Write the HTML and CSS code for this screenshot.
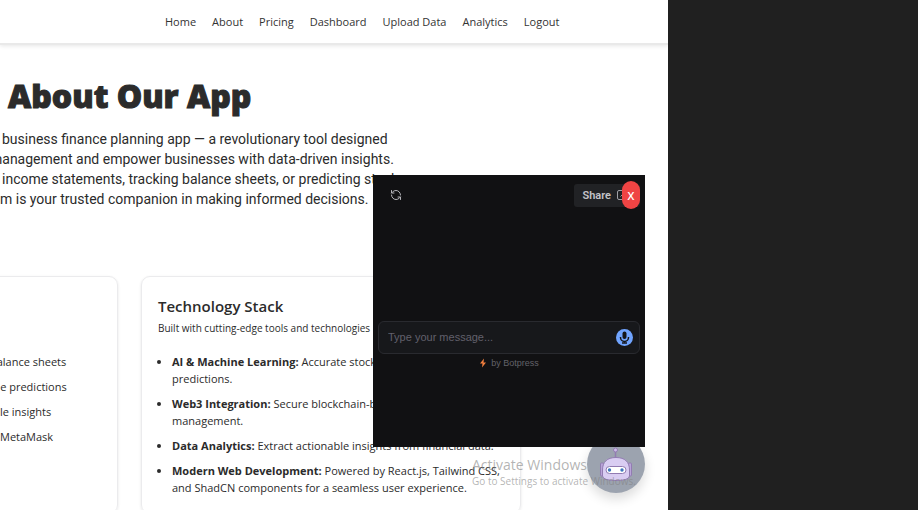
FILE: index.html
```html
<!DOCTYPE html>
<html lang="en">
<head>
<meta charset="utf-8">
<title>About Our App</title>
<link rel="stylesheet" href="styles.css">
</head>
<body>
<div class="desktop">
  <div class="page">
    <nav class="nav">
      <a href="#">Home</a>
      <a href="#">About</a>
      <a href="#">Pricing</a>
      <a href="#">Dashboard</a>
      <a href="#">Upload Data</a>
      <a href="#">Analytics</a>
      <a href="#">Logout</a>
    </nav>
    <main>
      <header class="hero">
        <h1>About Our App</h1>
        <p>business finance planning app — a revolutionary tool designed</p>
        <p class="cut">management and empower businesses with data-driven insights.</p>
        <p>income statements, tracking balance sheets, or predicting stock</p>
        <p class="flush">m is your trusted companion in making informed decisions.</p>
      </header>
      <div class="cards">
        <section class="card card-features">
          <ul class="plain">
            <li class="cut">balance sheets</li>
            <li class="cut">me predictions</li>
            <li>le insights</li>
            <li>MetaMask</li>
          </ul>
        </section>
        <section class="card">
          <h2>Technology Stack</h2>
          <p class="sub">Built with cutting-edge tools and technologies</p>
          <ul class="stack">
            <li><strong>AI &amp; Machine Learning:</strong> Accurate stock market<br>predictions.</li>
            <li><strong>Web3 Integration:</strong> Secure blockchain-based<br>management.</li>
            <li><strong>Data Analytics:</strong> Extract actionable insights from financial data.</li>
            <li><strong>Modern Web Development:</strong> Powered by React.js, Tailwind CSS,<br>and ShadCN components for a seamless user experience.</li>
          </ul>
        </section>
      </div>
    </main>

    <button class="bot" type="button" aria-label="Open chat">
      <svg viewBox="0 0 58 58" width="58" height="58" aria-hidden="true">
        <g stroke="#927cb2" stroke-width="1">
          <path d="M28.500 16v7" stroke-width="1.500"/>
          <circle cx="28.500" cy="15" r="2" fill="#cdbbe8"/>
          <rect x="13.500" y="28" width="3" height="13" rx="1" fill="#b9a4d8"/>
          <rect x="41.500" y="28" width="3" height="13" rx="1" fill="#b9a4d8"/>
          <path d="M15.500 41V35C15.500 27 20 22.500 29 22.500S42.500 27 42.500 35V41Q42 45.500 29 45.500T15.500 41Z" fill="#d9cdf2"/>
          <rect x="19" y="31.500" width="20" height="7" rx="3.500" fill="#fff"/>
        </g>
        <circle cx="22.500" cy="35" r="1.700" fill="#3f78bd"/>
        <circle cx="35" cy="35" r="1.700" fill="#3f78bd"/>
      </svg>
    </button>

    <section class="chat" aria-label="Chat">
      <div class="chat-top">
        <button class="refresh" type="button" aria-label="Restart conversation">
          <svg viewBox="0 0 24 24" width="12" height="12" fill="none" stroke="#b5b5ba" stroke-width="2" stroke-linecap="round" stroke-linejoin="round"><path d="M21 12a9 9 0 0 0-9-9 9.750 9.750 0 0 0-6.740 2.740L3 8M3 3v5h5M3 12a9 9 0 0 0 9 9 9.750 9.750 0 0 0 6.740-2.740L21 16M16 16h5v5"/></svg>
        </button>
        <button class="share" type="button">Share
          <svg viewBox="0 0 12 12" width="12" height="12" fill="none" stroke="#a0a0a5"><path d="M6 1.500H3Q1.500 1.500 1.500 3V9Q1.500 10.500 3 10.500H9Q10.500 10.500 10.500 9V7M4.500 7.500L10.500 1.500M8 1.500h2.500V4"/></svg>
        </button>
        <button class="close" type="button">X</button>
      </div>
      <form class="composer">
        <input type="text" aria-label="Message" placeholder="Type your message...">
        <button class="mic" type="button" aria-label="Record voice">
          <svg viewBox="0 0 17 17" width="17" height="17" fill="none"><rect x="6.500" y="2.500" width="4" height="7.500" rx="2" fill="#15161a"/><path d="M4.500 8v.5a4 4 0 0 0 8 0V8M8.500 12.500v2M6 14h5" stroke="#15161a" stroke-width="1.500"/></svg>
        </button>
      </form>
      <p class="brand">
        <svg viewBox="0 0 8 10" width="8" height="10" aria-hidden="true"><path d="M5 .5L1 5.500H3.500L3 9.500L7 4.500H4.500Z" fill="#f5803e"/></svg>
        by Botpress
      </p>
    </section>

    <div class="watermark">
      <p class="wm-title">Activate Windows</p>
      <p>Go to Settings to activate Windows.</p>
    </div>
  </div>
</div>
</body>
</html>
```
FILE: styles.css
```css
* { box-sizing: border-box; }
body, h1, h2, p, ul { margin: 0; padding: 0; }
body {
  background: #202020;
  color: #2b2b2b;
  font-family: "Open Sans", "Noto Sans", sans-serif;
  font-size: 11px;
  line-height: 17px;
}
button, input { font: inherit; border: 0; padding: 0; margin: 0; }
.desktop {
  display: grid;
  grid-template-columns: 334fr 125fr;
  height: 100vh;
}
.page {
  position: relative;
  overflow: hidden;
  background: #fff;
}
.nav {
  display: flex;
  gap: 16px;
  padding: 13px 0 13px 165px;
  box-shadow: 0 2px 0 #e9e9e9, 0 3px 4px rgba(0, 0, 0, .1);
}
.nav a { color: #333; text-decoration: none; }

.hero { padding-top: 32px; font-size: 14px; line-height: 20px; white-space: nowrap; }
.hero h1 {
  padding-left: 8px;
  margin-bottom: 12px;
  font-size: 32px;
  line-height: 42px;
  font-weight: 800;
  -webkit-text-stroke: 1px #2b2b2b;
}
.hero p { padding-left: 2px; font-family: Roboto, sans-serif; }
.hero .cut { padding-left: 0; text-indent: -10px; }
.hero .flush { padding-left: 0; }

.cards {
  display: grid;
  grid-template-columns: 130px 380px;
  gap: 23px;
  margin: 67px 0 0 -12px;
}
.card {
  border: 1px solid #ebebed;
  border-radius: 9px;
  padding: 17px 16px;
  box-shadow: 0 1px 3px rgba(0, 0, 0, .1);
  white-space: nowrap;
}
.card h2 { font-size: 15px; line-height: 24px; font-weight: 600; }
.sub { margin-top: 3px; font-size: 10px; line-height: 14px; }
ul { display: grid; gap: 8px; }
.stack { margin-top: 18px; padding-left: 14px; }
.card-features { padding: 76px 0 0 11px; }
.plain { list-style: none; }
.plain .cut { text-indent: -10px; }

.bot {
  position: absolute;
  right: 23px;
  bottom: 17px;
  width: 58px;
  height: 58px;
  border-radius: 50%;
  background: #9ca3af;
  box-shadow: 0 6px 12px rgba(0, 0, 0, .14);
}
.bot svg { display: block; }
.chat {
  position: absolute;
  right: 23px;
  bottom: 63px;
  width: 272px;
  height: 272px;
  padding: 5px;
  background: #111113;
  font-family: "Liberation Sans", Arial, sans-serif;
}
.chat-top { display: flex; align-items: center; height: 30px; padding-left: 12px; }
.refresh { width: 12px; height: 12px; background: none; }
.refresh svg { display: block; }
.share {
  display: flex;
  align-items: center;
  gap: 5px;
  height: 23px;
  margin-left: auto;
  padding: 0 12px 0 8px;
  border-radius: 3px;
  background: #212225;
  color: #c4c4c8;
  font-family: Roboto, sans-serif;
  font-weight: 600;
}
.close {
  width: 18px;
  height: 28px;
  margin-left: -18px;
  border-radius: 9px;
  background: #ef4444;
  color: #fff;
  z-index: 1;
  font-family: "Open Sans", sans-serif;
  font-weight: 600;
}
.composer {
  display: flex;
  align-items: center;
  height: 33px;
  margin-top: 111px;
  padding: 0 6px 0 9px;
  border: 1px solid #292a2f;
  border-radius: 6px;
  background: #17181b;
}
.composer input {
  flex: 1;
  min-width: 0;
  background: none;
  color: #ddd;
  font-size: 11px;
}
.composer input::placeholder { color: #62606c; }
.mic { width: 17px; height: 17px; border-radius: 50%; background: #70a4ff; }
.mic svg { display: block; }
.brand {
  display: flex;
  align-items: center;
  justify-content: center;
  gap: 4px;
  color: #626269;
  font-size: 9px;
  line-height: 18px;
}
.watermark {
  position: absolute;
  right: 36px;
  bottom: 20px;
  width: 160px;
  color: rgba(130, 130, 130, .6);
  font-size: 10px;
  white-space: nowrap;
}
.wm-title { font-size: 14px; }
```
